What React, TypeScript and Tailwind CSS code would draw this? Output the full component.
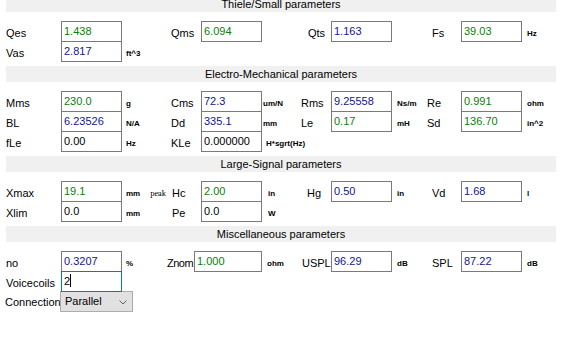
import type React from "react"

type Tone = "green" | "blue" | "black"

const toneClass: Record<Tone, string> = {
  green: "text-[#0b7d0b]",
  blue: "text-[#14148e]",
  black: "text-black",
}

interface FieldProps {
  label: string
  value: string
  tone: Tone
  unit?: React.ReactNode
  labelW: number
  labelPl?: number
  labelClass?: string
  boxW?: number
  unitW: number
  unitPl?: number
  focused?: boolean
}

// slot = label area + edit box + unit area, all fixed widths like the old VCL form
function Field({ label, value, tone, unit, labelW, labelPl = 0, labelClass = "", boxW = 61, unitW, unitPl = 5, focused }: FieldProps) {
  return (
    <div className="flex h-[20px] shrink-0">
      <div className="h-[20px] shrink-0" style={{ width: labelW, paddingLeft: labelPl }}>
        <div className={`pt-[2px] leading-[20px] text-[11px] text-black whitespace-nowrap ${labelClass}`}>{label}</div>
      </div>
      <div
        className={`relative h-[21px] shrink-0 bg-white border ${focused ? "z-10 border-[#0078d7]" : "border-[#7a7a7a]"}`}
        style={{ width: boxW }}
      >
        <span className={`block pl-[2px] leading-[19px] text-[11px] ${toneClass[tone]}`}>
          {value}
          {focused && <span className="inline-block w-px h-[13px] bg-black align-[-2px]"></span>}
        </span>
      </div>
      <div className="h-[20px] shrink-0 pt-[3px] leading-[20px] text-[8px] font-semibold text-black whitespace-nowrap" style={{ width: unitW, paddingLeft: unitPl }}>
        {unit}
      </div>
    </div>
  )
}

function Bar({ title, top }: { title: string; top?: boolean }) {
  return (
    <div
      className={`w-[550px] bg-[#f0f0f0] text-center text-[11px] text-black ${
        top ? "h-[12px] leading-[9px]" : "mt-[5px] h-[16px] leading-[16px]"
      }`}
    >
      {title}
    </div>
  )
}

// column geometry
const C1 = { labelW: 55, unitW: 49, unitPl: 4 }
const C2 = { labelW: 30, unitW: 39 }
const C3 = { labelW: 30, unitW: 35 }
const C4 = { labelW: 34, unitW: 34 }

export default function App() {
  return (
    <div className="w-[567px] h-[341px] overflow-hidden bg-white pl-[6px] font-['Liberation_Sans',Arial,sans-serif]">
      <Bar title="Thiele/Small parameters" top />
      <div className="mt-[9px]">
        <div className="flex">
          <Field label="Qes" value="1.438" tone="green" {...C1} />
          <Field label="Qms" value="6.094" tone="green" {...C2} />
          <Field label="Qts" value="1.163" tone="blue" {...C3} labelPl={7} />
          <Field label="Fs" value="39.03" tone="green" unit="Hz" {...C4} labelPl={5} />
        </div>
        <div className="flex">
          <Field label="Vas" value="2.817" tone="blue" unit="ft^3" {...C1} />
        </div>
      </div>

      <Bar title="Electro-Mechanical parameters" />
      <div className="mt-[9px]">
        <div className="flex">
          <Field label="Mms" value="230.0" tone="green" unit="g" {...C1} />
          <Field label="Cms" value="72.3" tone="blue" unit="um/N" {...C2} unitPl={1} />
          <Field label="Rms" value="9.25558" tone="blue" unit="Ns/m" {...C3} />
          <Field label="Re" value="0.991" tone="green" unit="ohm" {...C4} />
        </div>
        <div className="flex">
          <Field label="BL" value="6.23526" tone="blue" unit="N/A" {...C1} />
          <Field label="Dd" value="335.1" tone="blue" unit="mm" {...C2} unitPl={1} />
          <Field label="Le" value="0.17" tone="green" unit="mH" {...C3} />
          <Field label="Sd" value="136.70" tone="green" unit="in^2" {...C4} />
        </div>
        <div className="flex">
          <Field label="fLe" value="0.00" tone="black" unit="Hz" {...C1} />
          <Field label="KLe" value="0.000000" tone="black" unit="H*sgrt(Hz)" {...C2} unitW={60} unitPl={4} />
        </div>
      </div>

      <Bar title="Large-Signal parameters" />
      <div className="mt-[9px]">
        <div className="flex">
          <Field
            label="Xmax"
            value="19.1"
            tone="green"
            unit={
              <>
                mm<span className="ml-[10px] font-serif font-normal">peak</span>
              </>
            }
            {...C1}
          />
          <Field label="Hc" value="2.00" tone="green" unit="in" {...C2} labelPl={1} unitPl={6} />
          <Field label="Hg" value="0.50" tone="blue" unit="in" {...C3} labelPl={6} />
          <Field label="Vd" value="1.68" tone="blue" unit="l" {...C4} labelPl={5} />
        </div>
        <div className="flex">
          <Field label="Xlim" value="0.0" tone="black" unit="mm" {...C1} />
          <Field label="Pe" value="0.0" tone="black" unit="W" {...C2} labelPl={1} unitPl={6} />
        </div>
      </div>

      <Bar title="Miscellaneous parameters" />
      <div className="mt-[9px]">
        <div className="flex">
          <Field label="no" value="0.3207" tone="blue" unit="%" {...C1} />
          <Field
            label="Znom"
            value="1.000"
            tone="green"
            unit="ohm"
            labelW={23}
            labelClass="-ml-[4px] tracking-[-0.5px]"
            boxW={68}
            unitW={39}
          />
          <Field label="USPL" value="96.29" tone="blue" unit="dB" {...C3} labelPl={1} />
          <Field label="SPL" value="87.22" tone="blue" unit="dB" {...C4} labelPl={5} />
        </div>
        <div className="flex">
          <Field label="Voicecoils" value="2" tone="black" {...C1} focused />
        </div>
        <div className="flex h-[21px]">
          <div className="w-[55px] pt-[1px] leading-[21px] text-[11px] text-black whitespace-nowrap -ml-px">Connection</div>
          <div className="flex h-[21px] w-[73px] items-center justify-between border border-[#adadad] bg-[#e1e1e1] pl-[4px] pr-[5px]">
            <span className="text-[11px] leading-[19px] text-black">Parallel</span>
            <svg width="8" height="5" viewBox="0 0 8 5" className="mt-[1px]">
              <polyline points="0.5,0.5 4,4 7.5,0.5" fill="none" stroke="#606060" strokeWidth="1" />
            </svg>
          </div>
        </div>
      </div>
    </div>
  )
}
